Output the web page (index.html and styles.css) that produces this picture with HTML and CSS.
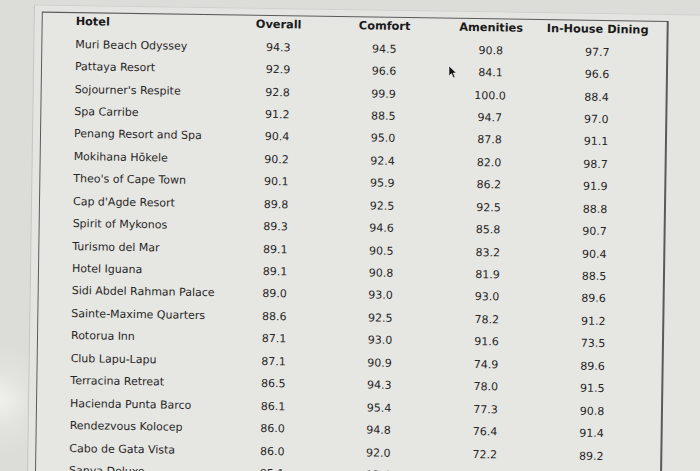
FILE: index.html
```html
<!DOCTYPE html>
<html>
<head>
<meta charset="utf-8">
<link rel="stylesheet" href="styles.css">
</head>
<body>
<div class="screen">
  <div class="panel">
    <div class="card">
      <div class="grid">
        <div class="th name">Hotel</div><div class="th">Overall</div><div class="th">Comfort</div><div class="th">Amenities</div><div class="th">In-House Dining</div>
        <div class="name">Muri Beach Odyssey</div><div>94.3</div><div>94.5</div><div>90.8</div><div>97.7</div>
        <div class="name">Pattaya Resort</div><div>92.9</div><div>96.6</div><div>84.1</div><div>96.6</div>
        <div class="name">Sojourner's Respite</div><div>92.8</div><div>99.9</div><div>100.0</div><div>88.4</div>
        <div class="name">Spa Carribe</div><div>91.2</div><div>88.5</div><div>94.7</div><div>97.0</div>
        <div class="name">Penang Resort and Spa</div><div>90.4</div><div>95.0</div><div>87.8</div><div>91.1</div>
        <div class="name">Mokihana Hōkele</div><div>90.2</div><div>92.4</div><div>82.0</div><div>98.7</div>
        <div class="name">Theo's of Cape Town</div><div>90.1</div><div>95.9</div><div>86.2</div><div>91.9</div>
        <div class="name">Cap d'Agde Resort</div><div>89.8</div><div>92.5</div><div>92.5</div><div>88.8</div>
        <div class="name">Spirit of Mykonos</div><div>89.3</div><div>94.6</div><div>85.8</div><div>90.7</div>
        <div class="name">Turismo del Mar</div><div>89.1</div><div>90.5</div><div>83.2</div><div>90.4</div>
        <div class="name">Hotel Iguana</div><div>89.1</div><div>90.8</div><div>81.9</div><div>88.5</div>
        <div class="name">Sidi Abdel Rahman Palace</div><div>89.0</div><div>93.0</div><div>93.0</div><div>89.6</div>
        <div class="name">Sainte-Maxime Quarters</div><div>88.6</div><div>92.5</div><div>78.2</div><div>91.2</div>
        <div class="name">Rotorua Inn</div><div>87.1</div><div>93.0</div><div>91.6</div><div>73.5</div>
        <div class="name">Club Lapu-Lapu</div><div>87.1</div><div>90.9</div><div>74.9</div><div>89.6</div>
        <div class="name">Terracina Retreat</div><div>86.5</div><div>94.3</div><div>78.0</div><div>91.5</div>
        <div class="name">Hacienda Punta Barco</div><div>86.1</div><div>95.4</div><div>77.3</div><div>90.8</div>
        <div class="name">Rendezvous Kolocep</div><div>86.0</div><div>94.8</div><div>76.4</div><div>91.4</div>
        <div class="name">Cabo de Gata Vista</div><div>86.0</div><div>92.0</div><div>72.2</div><div>89.2</div>
        <div class="name">Sanya Deluxe</div><div>85.1</div><div>93.4</div><div>77.8</div><div>84.6</div>
      </div>
    </div>
  </div>
</div>
<svg class="cursor" width="9" height="14" viewBox="0 0 9 14"><path d="M1 1 L1 11 L3.5 8.6 L5.4 12.8 L7 12 L5.2 8 L8.3 8 Z" fill="#111" stroke="#eee" stroke-width="0.6"/></svg>
</body>
</html>
```
FILE: styles.css
```css
html, body {
  margin: 0;
  padding: 0;
  height: 100%;
  overflow: hidden;
}
body {
  position: relative;
  background: radial-gradient(circle at 0 400px, #f0f0ed 0, #e2e2df 28px, #dcdcd9 55px) #dcdcd9;
  font-family: "DejaVu Sans", Verdana, sans-serif;
  color: #262626;
}
.screen {
  transform: rotate(0.85deg);
  transform-origin: 0 0;
  padding-top: 4px;
  width: 760px;
}
.panel {
  margin-left: 34px;
  border-left: 1px solid #c4c4c2;
  border-top: 1px solid #d0d0ce;
  background: #e4e4e1;
  padding: 6px 0 0 7px;
  height: 520px;
}
.card {
  width: 624px;
  border: 1px solid #5a5a5a;
  border-right-width: 2px;
  background: #e6e6e3;
  height: 520px;
}
.grid {
  display: grid;
  grid-template-columns: 150px 106px 106px 107px 106px;
  grid-auto-rows: 22.45px;
  padding-left: 33px;
  margin-top: -2px;
  font-size: 11px;
  line-height: 14px;
}
.grid > div {
  text-align: center;
  align-self: center;
  white-space: nowrap;
}
.grid > .name {
  text-align: left;
}
.grid > .th {
  font-weight: bold;
  font-size: 11.3px;
  color: #1a1a1a;
}
.cursor {
  position: absolute;
  left: 448px;
  top: 65px;
}
```
